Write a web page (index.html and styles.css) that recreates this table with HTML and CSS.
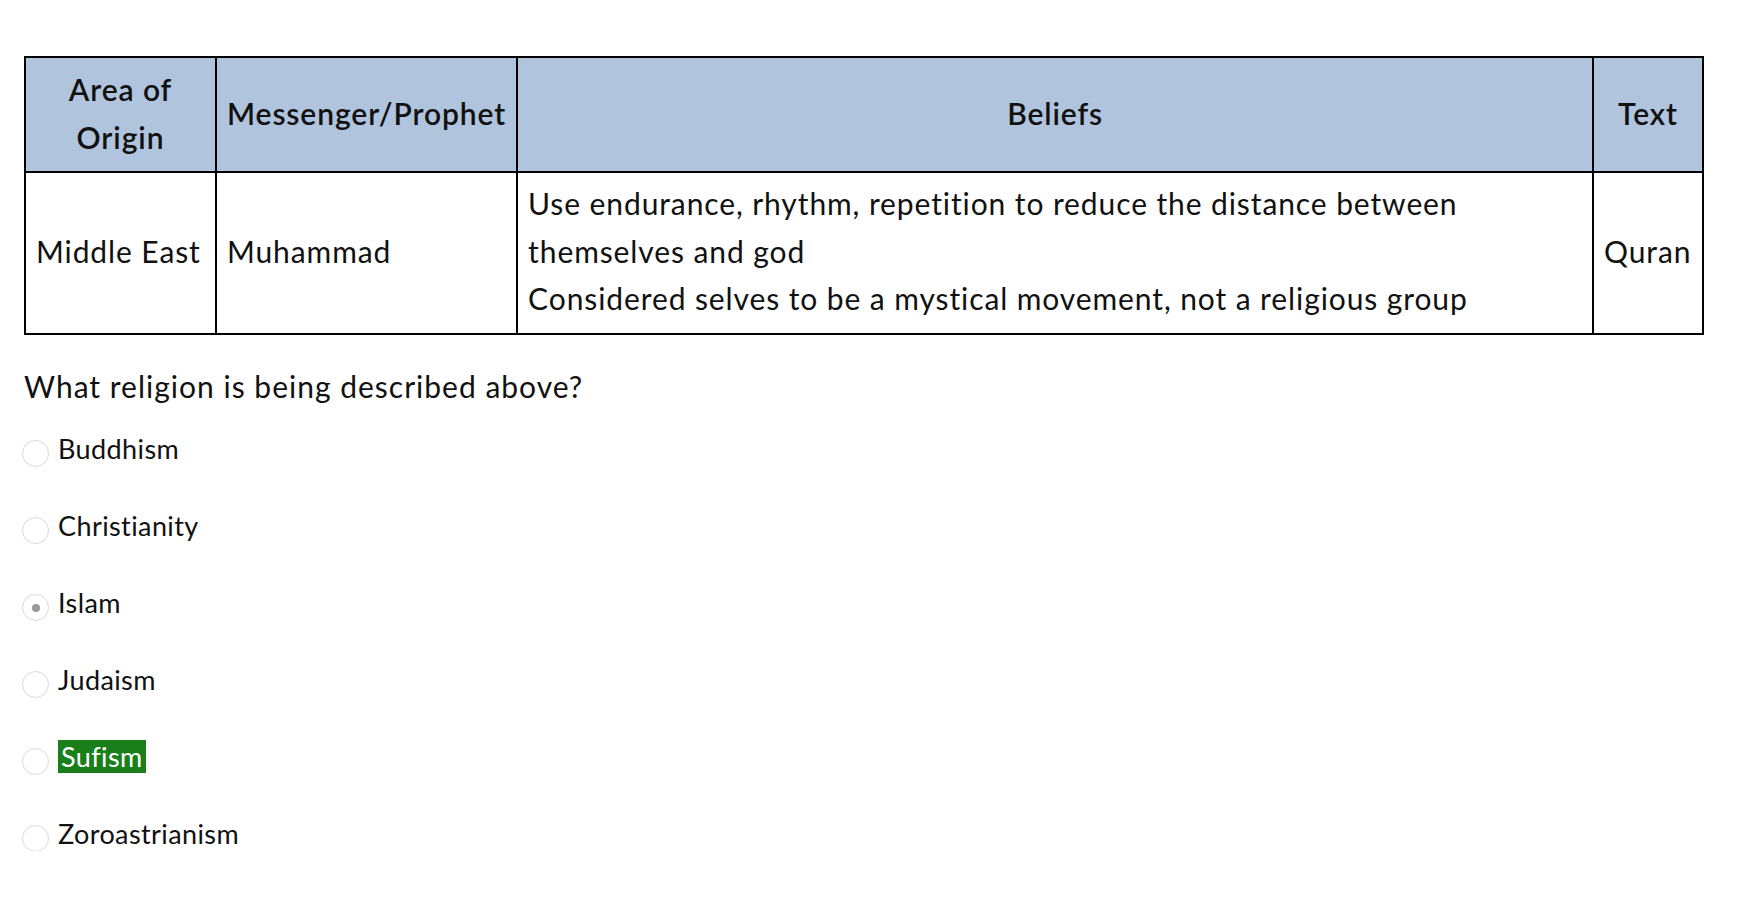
FILE: index.html
```html
<!DOCTYPE html>
<html>
<head>
<meta charset="utf-8">
<link rel="stylesheet" href="styles.css">
</head>
<body>
<div class="page">
  <table class="info">
    <thead>
      <tr>
        <th class="c1">Area of<br>Origin</th>
        <th class="c2">Messenger/Prophet</th>
        <th class="c3">Beliefs</th>
        <th class="c4">Text</th>
      </tr>
    </thead>
    <tbody>
      <tr>
        <td>Middle East</td>
        <td>Muhammad</td>
        <td>Use endurance, rhythm, repetition to reduce the distance between<br>themselves and god<br>Considered selves to be a mystical movement, not a religious group</td>
        <td>Quran</td>
      </tr>
    </tbody>
  </table>

  <p class="question">What religion is being described above?</p>

  <ul class="options">
    <li class="option"><span class="radio"></span><span class="label">Buddhism</span></li>
    <li class="option"><span class="radio"></span><span class="label">Christianity</span></li>
    <li class="option"><span class="radio checked"></span><span class="label">Islam</span></li>
    <li class="option"><span class="radio"></span><span class="label">Judaism</span></li>
    <li class="option"><span class="radio"></span><span class="label correct">Sufism</span></li>
    <li class="option"><span class="radio"></span><span class="label">Zoroastrianism</span></li>
  </ul>
</div>
</body>
</html>
```

FILE: styles.css
```css
html, body {
  margin: 0;
  padding: 0;
  background: #ffffff;
}

body {
  font-family: Lato, "Liberation Sans", sans-serif;
  color: #111111;
}

.page {
  padding: 56px 0 0 24px;
}

.info {
  border-collapse: collapse;
  width: 1680px;
  font-size: 30px;
  letter-spacing: 0.9px;
  line-height: 47.5px;
}

.info th,
.info td {
  border: 2px solid #000;
}

.info th {
  padding: 8px 10px 10px;
  background: #b0c4de;
  font-weight: 600;
  text-align: center;
  vertical-align: middle;
}

.info td {
  padding: 7px 10px 10px;
  text-align: left;
  vertical-align: middle;
}

.c1 { width: 169px; }
.c2 { width: 276px; }
.c3 { width: auto; }
.c4 { width: 88px; }

.question {
  margin: 27px 0 0 0;
  font-size: 30px;
  letter-spacing: 1px;
  line-height: 48px;
}

.options {
  list-style: none;
  margin: 22px 0 0 -2px;
  padding: 0;
  display: flex;
  flex-direction: column;
  gap: 43px;
}

.option {
  display: flex;
  align-items: center;
  height: 34px;
  font-size: 27px;
  letter-spacing: 0.4px;
}

.radio {
  box-sizing: border-box;
  flex: none;
  width: 27px;
  height: 27px;
  border: 1px solid #d8d8d8;
  border-radius: 50%;
  margin: 10px 9px 0 0;
  display: flex;
  align-items: center;
  justify-content: center;
}

.radio.checked::after {
  content: "";
  width: 8px;
  height: 8px;
  border-radius: 50%;
  background: #9a9a9a;
}

.label {
  line-height: 33px;
}

.label.correct {
  background: #1a7f1a;
  color: #ffffff;
  padding: 0 3px;
}
```
